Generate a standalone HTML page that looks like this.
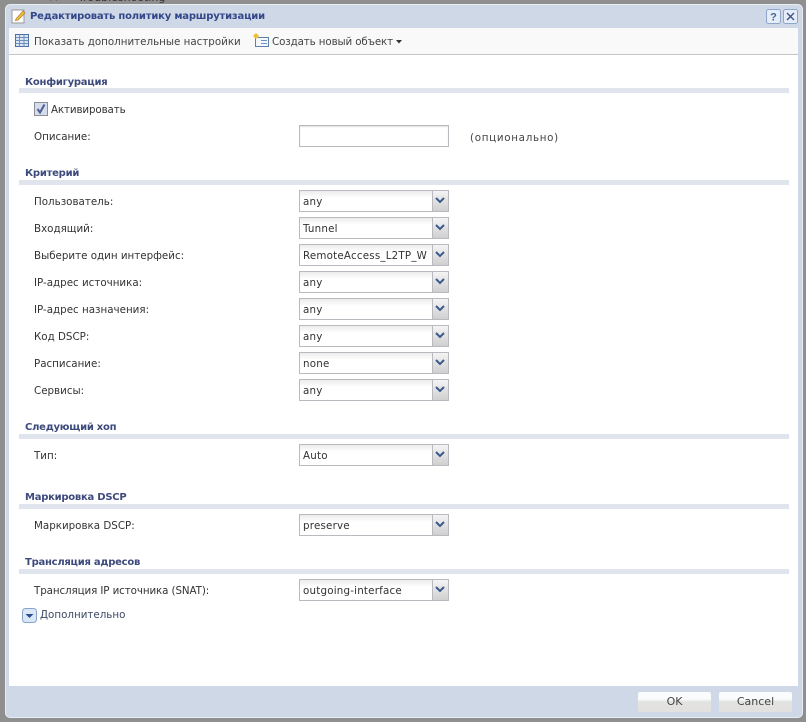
<!DOCTYPE html>
<html><head><meta charset="utf-8"><style>
*{box-sizing:border-box}
html,body{margin:0;padding:0}
body{width:806px;height:722px;overflow:hidden;position:relative;background:#8f8f8f;font-family:"DejaVu Sans","Liberation Sans",sans-serif;font-size:10.3px;color:#333}
.a{position:absolute;white-space:nowrap}
.dlg{position:absolute;left:5px;top:4px;width:798px;height:714px;background:#cfd8e6;border-radius:5px;border:1px solid #e8edf4}
.body{position:absolute;left:9px;top:28px;width:789px;height:658px;background:#fff}
.tb{position:absolute;left:9px;top:28px;width:789px;height:27px;background:#f9f9f9;border-bottom:1px solid #c4c4c4}
.h{position:absolute;left:25px;font-weight:bold;color:#3d4a7c;font-size:10px;letter-spacing:-.25px;line-height:14px;white-space:nowrap}
.bar{position:absolute;left:19px;width:770px;height:5px;background:#dfe4ed}
.l{position:absolute;left:34px;line-height:14px;white-space:nowrap;color:#333}
.s{position:absolute;left:299px;width:150px;height:22px;border:1px solid #b9b9bf;background:linear-gradient(#ececec,#fff 35%,#fff);line-height:22px;padding-left:3px;color:#333;white-space:nowrap;overflow:hidden;letter-spacing:.2px}
.s i{position:absolute;right:0;top:0;width:16px;height:20px;border-left:1px solid #b9b9bf;background:linear-gradient(#f4f4f4,#cfcfcf)}
.s svg{position:absolute;right:3px;top:6px}
.b{position:absolute;top:692px;width:73px;height:20px;background:linear-gradient(#fafbfd 35%,#e2e2e0 50%,#e2e1df);border-radius:2px;text-align:center;line-height:20px;color:#444;font-size:11px}
</style></head><body>
<div class="a" style="left:78px;top:-9px;font-size:11px;color:#333">Troubleshooting</div>
<div class="a" style="left:48px;top:-9px;font-size:11px;color:#333;font-weight:bold">▾▾</div>
<div class="dlg"></div>
<div class="body"></div>
<div class="tb"></div>

<svg class="a" style="left:11px;top:8px" width="16" height="16" viewBox="0 0 16 16"><rect x="1" y="2" width="12" height="13" fill="#fff" stroke="#9a9a9a"/><path d="M5 11 L12 3 L14 5 L7 12 L4.500 12.500Z" fill="#f2c23c" stroke="#b5822a" stroke-width=".8"/></svg>
<div class="a" style="left:30px;top:10px;font-weight:bold;color:#33478a;font-size:10px;letter-spacing:-.2px;line-height:14px">Редактировать политику маршрутизации</div>
<svg class="a" style="left:766px;top:9px" width="32" height="15" viewBox="0 0 32 15"><rect x=".5" y=".5" width="14" height="14" rx="2" fill="#e4edf8" stroke="#8ea6cc"/><text x="7.500" y="11.500" text-anchor="middle" font-family="Liberation Sans" font-weight="bold" font-size="11" fill="#3f659c">?</text><rect x="17.500" y=".5" width="14" height="14" rx="2" fill="#e4edf8" stroke="#8ea6cc"/><path d="M21 4L28 11M28 4L21 11" stroke="#3a4f86" stroke-width="1.300"/></svg>

<svg class="a" style="left:15px;top:34px" width="14" height="14" viewBox="0 0 14 14"><rect x=".5" y=".5" width="13" height="12" fill="#dbe6f5" stroke="#4a6fa5"/><path d="M.5 3.500H13.500M.5 6.500H13.500M.5 9.500H13.500M4.500 .5V12.500M9 .5V12.500" stroke="#6f8fbd"/></svg>
<div class="a" style="left:34px;top:35px;line-height:14px;color:#444">Показать дополнительные настройки</div>
<svg class="a" style="left:253px;top:33px" width="16" height="15" viewBox="0 0 16 15"><rect x="2.500" y="4.500" width="13" height="9" fill="#f4f7fb" stroke="#5f7fa8"/><path d="M8 7.500H14M8 10.500H14" stroke="#6f8fbd"/><path d="M1 1h4v4H1z" fill="#f5d44e"/><path d="M3 0V6M0 3H6" stroke="#e6b82e"/></svg>
<div class="a" style="left:272px;top:35px;line-height:14px;color:#444;letter-spacing:-.12px">Создать новый объект</div>
<svg class="a" style="left:396px;top:40px" width="6" height="4"><path d="M0 0H6L3 3.500Z" fill="#333"/></svg>

<div class="h" style="top:76px">Конфигурация</div><div class="bar" style="top:88px"></div>
<svg class="a" style="left:34px;top:102px" width="14" height="14" viewBox="0 0 14 14"><rect x=".5" y=".5" width="13" height="13" fill="#d5dcec" stroke="#8d8d95"/><path d="M3.500 7L6 10.500L10.500 2.500" fill="none" stroke="#4d5d96" stroke-width="2"/></svg>
<div class="a" style="left:51px;top:103px;line-height:14px;letter-spacing:-.12px">Активировать</div>
<div class="l" style="top:130px">Описание:</div>
<div class="s" style="top:125px;background:#fff;box-shadow:inset 0 1px 1px #e0e0e0"></div>
<div class="a" style="left:470px;top:131px;line-height:14px;color:#444;letter-spacing:.7px">(опционально)</div>

<div class="h" style="top:167px">Критерий</div><div class="bar" style="top:180px"></div>

<div class="l" style="top:195px">Пользователь:</div>
<div class="s" style="top:190px">any<i><svg width="10" height="7"><path d="M1 1L5 5L9 1" fill="none" stroke="#3a5a8c" stroke-width="2"/></svg></i></div>
<div class="l" style="top:222px">Входящий:</div>
<div class="s" style="top:217px">Tunnel<i><svg width="10" height="7"><path d="M1 1L5 5L9 1" fill="none" stroke="#3a5a8c" stroke-width="2"/></svg></i></div>
<div class="l" style="top:249px">Выберите один интерфейс:</div>
<div class="s" style="top:244px">RemoteAccess_L2TP_W<i><svg width="10" height="7"><path d="M1 1L5 5L9 1" fill="none" stroke="#3a5a8c" stroke-width="2"/></svg></i></div>
<div class="l" style="top:276px">IP-адрес источника:</div>
<div class="s" style="top:271px">any<i><svg width="10" height="7"><path d="M1 1L5 5L9 1" fill="none" stroke="#3a5a8c" stroke-width="2"/></svg></i></div>
<div class="l" style="top:303px">IP-адрес назначения:</div>
<div class="s" style="top:298px">any<i><svg width="10" height="7"><path d="M1 1L5 5L9 1" fill="none" stroke="#3a5a8c" stroke-width="2"/></svg></i></div>
<div class="l" style="top:330px">Код DSCP:</div>
<div class="s" style="top:325px">any<i><svg width="10" height="7"><path d="M1 1L5 5L9 1" fill="none" stroke="#3a5a8c" stroke-width="2"/></svg></i></div>
<div class="l" style="top:357px">Расписание:</div>
<div class="s" style="top:352px">none<i><svg width="10" height="7"><path d="M1 1L5 5L9 1" fill="none" stroke="#3a5a8c" stroke-width="2"/></svg></i></div>
<div class="l" style="top:384px">Сервисы:</div>
<div class="s" style="top:379px">any<i><svg width="10" height="7"><path d="M1 1L5 5L9 1" fill="none" stroke="#3a5a8c" stroke-width="2"/></svg></i></div>

<div class="h" style="top:421px">Следующий хоп</div><div class="bar" style="top:434px"></div>
<div class="l" style="top:449px">Тип:</div>
<div class="s" style="top:444px">Auto<i><svg width="10" height="7"><path d="M1 1L5 5L9 1" fill="none" stroke="#3a5a8c" stroke-width="2"/></svg></i></div>

<div class="h" style="top:491px">Маркировка DSCP</div><div class="bar" style="top:504px"></div>
<div class="l" style="top:519px">Маркировка DSCP:</div>
<div class="s" style="top:514px">preserve<i><svg width="10" height="7"><path d="M1 1L5 5L9 1" fill="none" stroke="#3a5a8c" stroke-width="2"/></svg></i></div>

<div class="h" style="top:556px">Трансляция адресов</div><div class="bar" style="top:569px"></div>
<div class="l" style="top:584px;letter-spacing:-.1px">Трансляция IP источника (SNAT):</div>
<div class="s" style="top:579px">outgoing-interface<i><svg width="10" height="7"><path d="M1 1L5 5L9 1" fill="none" stroke="#3a5a8c" stroke-width="2"/></svg></i></div>

<svg class="a" style="left:22px;top:608px" width="15" height="15" viewBox="0 0 15 15"><rect x=".5" y=".5" width="14" height="14" rx="3" fill="#dbe7f6" stroke="#86a3cc"/><path d="M3.500 6H11.500L7.500 10Z" fill="#2d4f8e"/></svg>
<div class="a" style="left:40px;top:608px;line-height:14px;color:#3d4a66">Дополнительно</div>

<div class="b" style="left:638px">OK</div>
<div class="b" style="left:719px">Cancel</div>
</body></html>
